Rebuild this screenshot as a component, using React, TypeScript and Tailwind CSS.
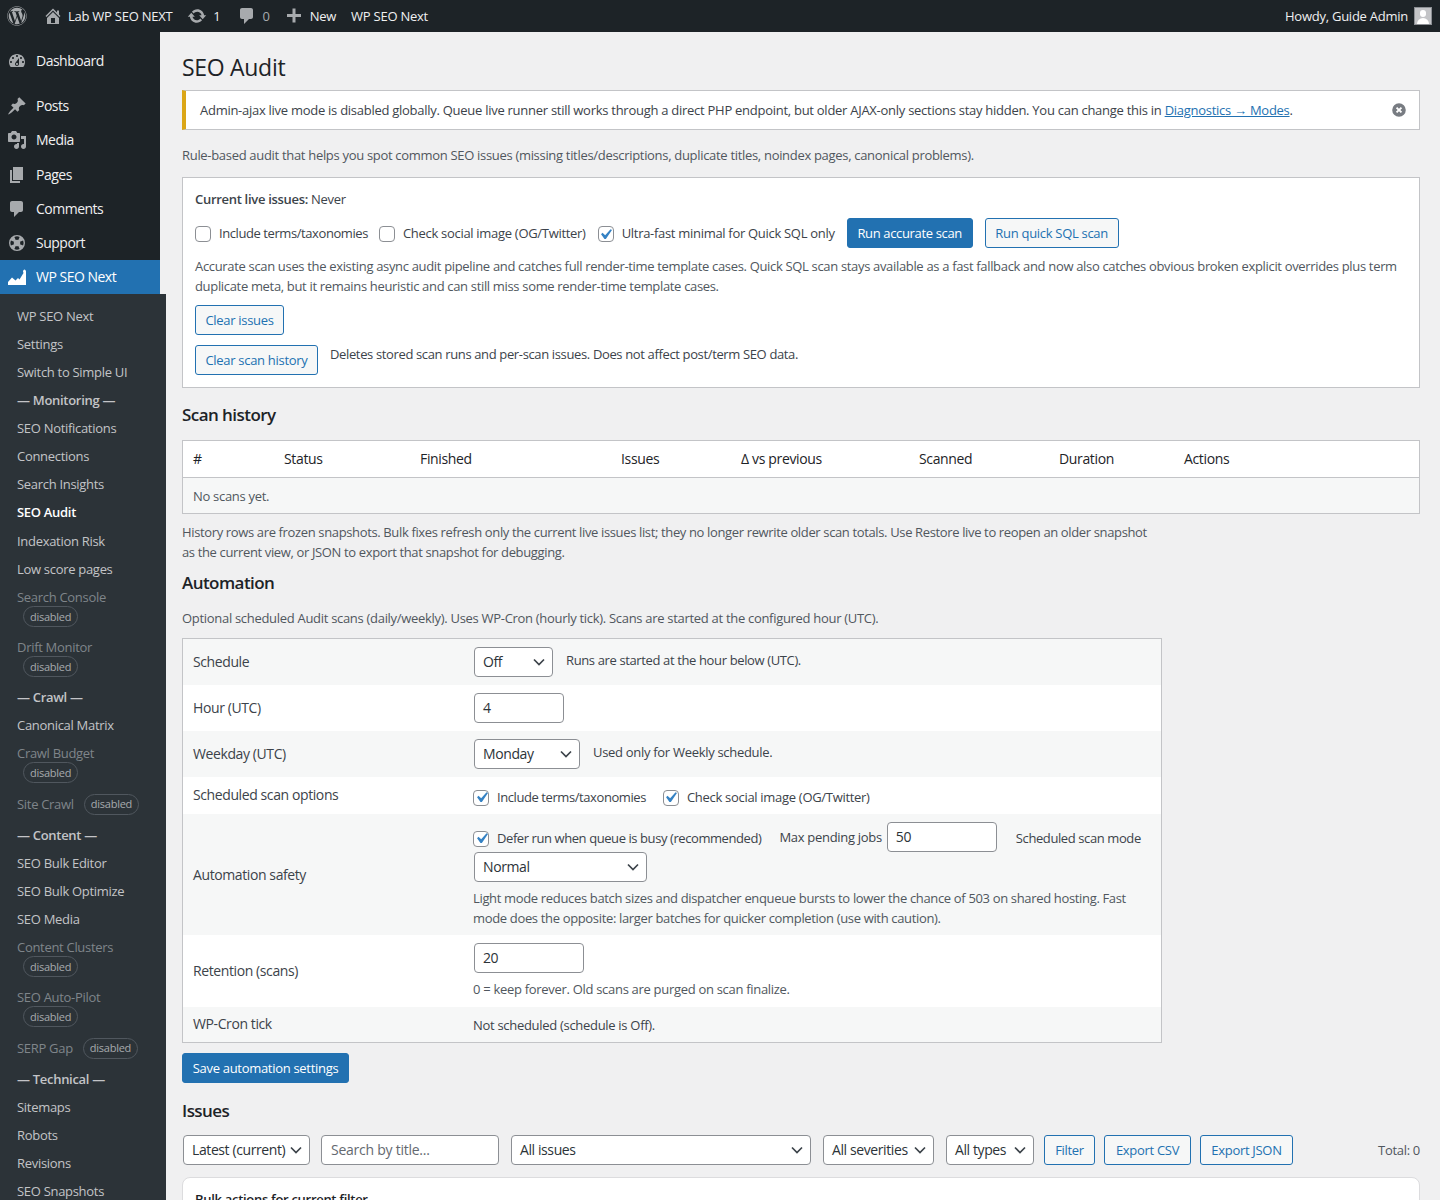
import type { ReactNode } from "react";
import { FaWordpress } from "react-icons/fa";

const PATHS = {
  home: "M16 8.5l1.53 1.53-1.06 1.06L10 4.62l-6.47 6.47-1.06-1.06L10 2.5l4 4v-2h2v4zm-6-2.46l6 5.99V18H4v-5.97zM12 17v-5H8v5h4z",
  update:
    "M10.2 3.28c3.53 0 6.43 2.61 6.92 6h2.08l-3.5 4-3.5-4h2.32c-.45-1.97-2.21-3.45-4.32-3.45-1.45 0-2.73.71-3.54 1.78L4.95 5.66C6.23 4.2 8.11 3.28 10.2 3.28zm-.4 13.44c-3.52 0-6.43-2.61-6.92-6H.8l3.5-4c1.17 1.33 2.33 2.67 3.5 4H5.48c.45 1.97 2.21 3.45 4.32 3.45 1.45 0 2.73-.71 3.54-1.77l1.71 1.95c-1.28 1.46-3.15 2.37-5.25 2.37z",
  comment: "M5 2h9c1.1 0 2 .9 2 2v7c0 1.1-.9 2-2 2h-2l-5 5v-5H5c-1.1 0-2-.9-2-2V4c0-1.1.9-2 2-2z",
  plus: "M17 8v3h-5.5v5.5h-3V11H3V8h5.5V2.5h3V8z",
  dashboard:
    "M3.76 16h12.48c1.1-1.37 1.76-3.11 1.76-5 0-4.42-3.58-8-8-8s-8 3.58-8 8c0 1.89.66 3.63 1.76 5zM10 4c.55 0 1 .45 1 1s-.45 1-1 1-1-.45-1-1 .45-1 1-1zM6 6c.55 0 1 .45 1 1s-.45 1-1 1-1-.45-1-1 .45-1 1-1zm8 0c.55 0 1 .45 1 1s-.45 1-1 1-1-.45-1-1 .45-1 1-1zm-5.37 5.55L12 7v6c0 1.1-.9 2-2 2s-2-.9-2-2c0-.57.24-1.08.63-1.45zM4 10c.55 0 1 .45 1 1s-.45 1-1 1-1-.45-1-1 .45-1 1-1zm12 0c.55 0 1 .45 1 1s-.45 1-1 1-1-.45-1-1 .45-1 1-1zm-5 3c0-.55-.45-1-1-1s-1 .45-1 1 .45 1 1 1 1-.45 1-1z",
  post: "M10.44 3.02l1.82-1.82 6.36 6.35-1.83 1.82c-1.05-.68-2.48-.57-3.41.36l-.75.75c-.92.93-1.04 2.35-.35 3.41l-1.83 1.82-2.41-2.41-2.8 2.79c-.42.42-3.38 2.71-3.8 2.29s1.86-3.39 2.28-3.81l2.79-2.79L4.1 9.36l1.83-1.82c1.05.69 2.48.57 3.4-.36l.75-.75c.93-.92 1.05-2.35.36-3.41z",
  media:
    "M13 11V4c0-.55-.45-1-1-1h-1.67L9 1H5L3.67 3H2c-.55 0-1 .45-1 1v7c0 .55.45 1 1 1h10c.55 0 1-.45 1-1zM7 4.5c1.38 0 2.5 1.12 2.5 2.5S8.38 9.5 7 9.5 4.5 8.38 4.5 7 5.62 4.5 7 4.5zM14 6h5v10.5c0 1.38-1.12 2.5-2.5 2.5S14 17.88 14 16.5s1.12-2.5 2.5-2.5c.17 0 .34.02.5.05V9h-3V6zm-4 8.05V13h2v3.5c0 1.38-1.12 2.5-2.5 2.5S7 17.88 7 16.5 8.12 14 9.5 14c.17 0 .34.02.5.05z",
  page: "M6 15V2h10v13H6zm-1 1h8v2H3V5h2v11z",
  sos: "M10 2a8 8 0 1 0 0 16 8 8 0 0 0 0-16zM7.4 3.9a6.6 6.6 0 0 1 5.2 0L11.3 7a3.2 3.2 0 0 0-2.6 0zM3.9 12.6a6.6 6.6 0 0 1 0-5.2L7 8.7a3.2 3.2 0 0 0 0 2.6zm8.7 3.5a6.6 6.6 0 0 1-5.2 0L8.7 13a3.2 3.2 0 0 0 2.6 0zm3.5-3.5L13 11.3a3.2 3.2 0 0 0 0-2.6l3.1-1.3a6.6 6.6 0 0 1 0 5.2z",
  chart: "M1 18v-3l4-4.500 3.500 3 2.500-2.500 1.500 1.500 4-6.500-.500-1.500c0-1 .800-2 1.500-2s1.500 1 1.500 2V18z",
};

function Dash({ d, className }: { d: string; className: string }) {
  return (
    <svg viewBox="0 0 20 20" fill="currentColor" className={className}>
      <path d={d} />
    </svg>
  );
}

function Check({ on }: { on?: boolean }) {
  return (
    <span className="flex h-4 w-4 shrink-0 items-center justify-center rounded-[4px] border border-[#8c8f94] bg-white">
      {on && (
        <svg viewBox="0 0 20 20" className="h-[21px] w-[21px] shrink-0 text-[#3582c4]" fill="currentColor">
          <path d="M14.83 4.89l1.34.94-5.81 8.38H9.02L5.78 9.67l1.34-1.25 2.57 2.4z" />
        </svg>
      )}
    </span>
  );
}

function Option({ on, label, className = "" }: { on?: boolean; label: string; className?: string }) {
  return (
    <label className={`flex items-center gap-2 ${className}`}>
      <Check on={on} />
      <span>{label}</span>
    </label>
  );
}

function Chevron() {
  return (
    <svg viewBox="0 0 20 20" className="h-5 w-5 shrink-0 text-[#3c434a]" fill="none" stroke="currentColor" strokeWidth="1.7">
      <path d="M5 7.500l5 5 5-5" />
    </svg>
  );
}

function Select({ value, className }: { value: string; className: string }) {
  return (
    <div
      className={`flex h-[30px] shrink-0 items-center justify-between rounded-[4px] border border-[#8c8f94] bg-white pl-2 pr-[3px] text-[14px] tracking-[-0.4px] text-[#2c3338] ${className}`}
    >
      <span className="pb-px">{value}</span>
      <Chevron />
    </div>
  );
}

function Field({ value, className }: { value: string; className: string }) {
  return (
    <div
      className={`flex h-[30px] shrink-0 items-center rounded-[4px] border border-[#8c8f94] bg-white px-2 pb-px text-[14px] tracking-[-0.4px] text-[#2c3338] ${className}`}
    >
      {value}
    </div>
  );
}

function Btn({ children, className = "" }: { children: string; className?: string }) {
  return (
    <button
      type="button"
      className={`flex h-[30px] shrink-0 items-center justify-center rounded-[3px] border border-[#2271b1] bg-[#f6f7f7] pt-[2px] text-[13px] text-[#2271b1] ${className}`}
    >
      {children}
    </button>
  );
}

function PrimaryBtn({ children, className = "" }: { children: string; className?: string }) {
  return (
    <button
      type="button"
      className={`flex h-[30px] shrink-0 items-center justify-center rounded-[3px] border border-[#2271b1] bg-[#2271b1] pt-[2px] text-[13px] text-white ${className}`}
    >
      {children}
    </button>
  );
}

const TOP_MENU = [
  { label: "Posts", icon: PATHS.post },
  { label: "Media", icon: PATHS.media },
  { label: "Pages", icon: PATHS.page },
  { label: "Comments", icon: PATHS.comment },
  { label: "Support", icon: PATHS.sos },
];

type SubItem = { label: string; kind?: "section" | "current" | "stacked" | "inline" };

const SUB_MENU: SubItem[] = [
  { label: "WP SEO Next" },
  { label: "Settings" },
  { label: "Switch to Simple UI" },
  { label: "— Monitoring —", kind: "section" },
  { label: "SEO Notifications" },
  { label: "Connections" },
  { label: "Search Insights" },
  { label: "SEO Audit", kind: "current" },
  { label: "Indexation Risk" },
  { label: "Low score pages" },
  { label: "Search Console", kind: "stacked" },
  { label: "Drift Monitor", kind: "stacked" },
  { label: "— Crawl —", kind: "section" },
  { label: "Canonical Matrix" },
  { label: "Crawl Budget", kind: "stacked" },
  { label: "Site Crawl", kind: "inline" },
  { label: "— Content —", kind: "section" },
  { label: "SEO Bulk Editor" },
  { label: "SEO Bulk Optimize" },
  { label: "SEO Media" },
  { label: "Content Clusters", kind: "stacked" },
  { label: "SEO Auto-Pilot", kind: "stacked" },
  { label: "SERP Gap", kind: "inline" },
  { label: "— Technical —", kind: "section" },
  { label: "Sitemaps" },
  { label: "Robots" },
  { label: "Revisions" },
  { label: "SEO Snapshots" },
];

function Badge() {
  return (
    <span className="inline-flex h-[21px] items-center rounded-full border border-[#50575e] px-[6px] text-[11px] tracking-[-0.25px] text-[#a7aaad]">
      disabled
    </span>
  );
}

function SubRow({ item }: { item: SubItem }) {
  if (item.kind === "stacked") {
    return (
      <div className="h-[50px] pl-[17px] pt-[4.5px] text-[#7f858a]">
        <div className="leading-[18px]">{item.label}</div>
        <div className="pl-[6px] leading-[21px]">
          <Badge />
        </div>
      </div>
    );
  }
  if (item.kind === "inline") {
    return (
      <div className="flex h-[31.5px] items-center gap-[10px] pb-[2px] pl-[17px] text-[#7f858a]">
        {item.label}
        <Badge />
      </div>
    );
  }
  const tone =
    item.kind === "current"
      ? "font-semibold text-white"
      : item.kind === "section"
        ? "font-semibold text-[#c3c4c7]"
        : "text-[#c3c4c7]";
  return <div className={`flex h-[28.14px] items-center pl-[17px] ${tone}`}>{item.label}</div>;
}

function Sidebar() {
  return (
    <aside className="w-40 shrink-0 bg-[#1d2327] text-[14px] tracking-[-0.5px] text-[#f0f0f1]">
      <div className="mt-3 flex h-[34px] items-center gap-[9px] pl-[7px]">
        <Dash d={PATHS.dashboard} className="h-5 w-5 text-[#a7aaad]" />
        <span className="pb-[2px]">Dashboard</span>
      </div>
      <div className="mt-[11px]">
        {TOP_MENU.map((m) => (
          <div key={m.label} className="flex h-[34.3px] items-center gap-[9px] pl-[7px]">
            <Dash d={m.icon} className="h-5 w-5 text-[#a7aaad]" />
            <span className="pb-px">{m.label}</span>
          </div>
        ))}
      </div>
      <div className="flex h-[34px] items-center gap-[9px] bg-[#2271b1] pl-[7px] text-white">
        <Dash d={PATHS.chart} className="h-5 w-5" />
        <span className="pb-px">WP SEO Next</span>
      </div>
      <div className="w-[166px] bg-[#2c3338] pb-10 pt-[7.8px] text-[13px] tracking-[-0.3px]">
        {SUB_MENU.map((item) => (
          <SubRow key={item.label} item={item} />
        ))}
      </div>
    </aside>
  );
}

function TopBar() {
  return (
    <header className="flex h-8 items-center justify-between bg-[#1d2327] pr-2 text-[13px] tracking-[-0.25px] text-[#f0f0f1]">
      <div className="flex items-center">
        <FaWordpress className="ml-[7px] h-5 w-5 text-[#a7aaad]" />
        <Dash d={PATHS.home} className="ml-[16px] h-5 w-5 text-[#a7aaad]" />
        <span className="ml-[5px] pt-[2px]">Lab WP SEO NEXT</span>
        <Dash d={PATHS.update} className="ml-[15px] h-5 w-5 text-[#a7aaad]" />
        <span className="ml-[6px] pt-[2px]">1</span>
        <Dash d={PATHS.comment} className="ml-[16px] h-5 w-5 text-[#a7aaad]" />
        <span className="ml-[6px] pt-[2px] text-[#a7aaad]">0</span>
        <Dash d={PATHS.plus} className="ml-[14px] h-5 w-5 text-[#a7aaad]" />
        <span className="ml-[6px] pt-[2px]">New</span>
        <span className="ml-[15px] pt-[2px]">WP SEO Next</span>
      </div>
      <div className="flex items-center gap-[6px]">
        <span className="pt-[2px]">Howdy, Guide Admin</span>
        <span className="relative h-[18px] w-[18px] overflow-hidden border border-[#8c8f94] bg-[#c3c4c7]">
          <span className="absolute left-[5px] top-[2px] h-[7px] w-[6px] rounded-full bg-white" />
          <span className="absolute left-[2px] top-[10px] h-[8px] w-3 rounded-t-full bg-white" />
        </span>
      </div>
    </header>
  );
}

function Notice() {
  return (
    <div className="mt-2 flex h-10 items-center justify-between border border-l-4 border-[#c3c4c7] border-l-[#dba617] bg-white pl-[14px] pr-[12px] text-[#3c434a]">
      <p className="pt-[2px] tracking-[-0.27px]">
        Admin-ajax live mode is disabled globally. Queue live runner still works through a direct PHP endpoint, but older
        AJAX-only sections stay hidden. You can change this in{" "}
        <a href="#" className="text-[#2271b1] underline">
          Diagnostics → Modes
        </a>
        .
      </p>
      <svg viewBox="0 0 20 20" className="h-4 w-4 shrink-0 text-[#787c82]" fill="currentColor">
        <path d="M10 1.500a8.500 8.500 0 1 0 0 17 8.500 8.500 0 0 0 0-17zm3.900 10.700l-1.700 1.700L10 11.700l-2.200 2.200-1.700-1.700L8.300 10 6.100 7.800l1.700-1.700L10 8.300l2.200-2.200 1.700 1.700L11.700 10z" />
      </svg>
    </div>
  );
}

function ScanCard() {
  return (
    <section className="mt-3 h-[211px] border border-[#c3c4c7] bg-white px-3 pt-[11px]">
      <p className="leading-5">
        <strong className="font-semibold">Current live issues:</strong> Never
      </p>
      <div className="mt-[9px] flex items-center">
        <Option label="Include terms/taxonomies" className="pt-[2px] tracking-[-0.42px]" />
        <Option label="Check social image (OG/Twitter)" className="ml-[11px] pt-[2px]" />
        <Option on label="Ultra-fast minimal for Quick SQL only" className="ml-3 pt-[2px]" />
        <PrimaryBtn className="ml-3 w-[126px] tracking-[-0.35px]">Run accurate scan</PrimaryBtn>
        <Btn className="ml-3 w-[134px]">Run quick SQL scan</Btn>
      </div>
      <p className="mt-2 leading-5 tracking-[-0.33px] text-[#50575e]">
        Accurate scan uses the existing async audit pipeline and catches full render-time template cases. Quick SQL scan
        stays available as a fast fallback and now also catches obvious broken explicit overrides plus term duplicate
        meta, but it remains heuristic and can still miss some render-time template cases.
      </p>
      <Btn className="mt-[9px] w-[89px]">Clear issues</Btn>
      <div className="mt-[10px] flex items-start">
        <Btn className="w-[123px]">Clear scan history</Btn>
        <span className="-mt-px ml-3 leading-5 tracking-[-0.36px]">
          Deletes stored scan runs and per-scan issues. Does not affect post/term SEO data.
        </span>
      </div>
    </section>
  );
}

function HistoryTable() {
  const cols = ["#", "Status", "Finished", "Issues", "Δ vs previous", "Scanned", "Duration", "Actions"];
  return (
    <div className="mt-[13px] border border-[#c3c4c7] bg-white">
      <div className="grid h-[37px] grid-cols-[91px_136px_201px_120px_178px_140px_125px_1fr] items-center border-b border-[#c3c4c7] pb-[2px] pl-[10px] text-[14px] tracking-[-0.35px] text-[#1d2327]">
        {cols.map((c) => (
          <span key={c}>{c}</span>
        ))}
      </div>
      <div className="flex h-[35px] items-center bg-[#f6f7f7] pl-[10px] pt-[2px] text-[#50575e]">No scans yet.</div>
    </div>
  );
}

function SettingRow({
  label,
  striped,
  className,
  labelClass = "pb-[2px]",
  children,
}: {
  label: string;
  striped?: boolean;
  className: string;
  labelClass?: string;
  children: ReactNode;
}) {
  return (
    <div className={`flex items-center ${striped ? "bg-[#f6f7f7]" : "bg-white"} ${className}`}>
      <div className={`w-[290px] shrink-0 pl-[10px] text-[14px] tracking-[-0.4px] text-[#3c434a] ${labelClass}`}>{label}</div>
      <div className="min-w-0 flex-1">{children}</div>
    </div>
  );
}

function AutomationTable() {
  return (
    <div className="mt-[10px] w-[980px] border border-[#c3c4c7] bg-white">
      <SettingRow label="Schedule" striped className="h-[46px]">
        <div className="flex items-center pl-px">
          <Select value="Off" className="w-[79px]" />
          <span className="ml-[13px] pb-[2px] tracking-[-0.37px]">Runs are started at the hour below (UTC).</span>
        </div>
      </SettingRow>
      <SettingRow label="Hour (UTC)" className="h-[46px]">
        <Field value="4" className="ml-px w-[90px]" />
      </SettingRow>
      <SettingRow label="Weekday (UTC)" striped className="h-[46px]">
        <div className="flex items-center pl-px">
          <Select value="Monday" className="w-[106px]" />
          <span className="ml-[13px] pb-[2px]">Used only for Weekly schedule.</span>
        </div>
      </SettingRow>
      <SettingRow label="Scheduled scan options" className="h-[37px]">
        <div className="flex items-center pt-1">
          <Option on label="Include terms/taxonomies" className="tracking-[-0.42px]" />
          <Option on label="Check social image (OG/Twitter)" className="ml-[17px]" />
        </div>
      </SettingRow>
      <SettingRow label="Automation safety" striped className="h-[121px]" labelClass="">
        <div className="flex h-[30px] items-center">
          <Option on label="Defer run when queue is busy (recommended)" className="pt-1 tracking-[-0.42px]" />
          <span className="ml-[18px] pt-[2px]">Max pending jobs</span>
          <Field value="50" className="ml-[5px] w-[110px]" />
          <span className="ml-[19px] pt-1 tracking-[-0.4px]">Scheduled scan mode</span>
        </div>
        <Select value="Normal" className="ml-px w-[173px]" />
        <p className="mt-[6px] w-[670px] leading-5 tracking-[-0.34px] text-[#50575e]">
          Light mode reduces batch sizes and dispatcher enqueue bursts to lower the chance of 503 on shared hosting. Fast
          mode does the opposite: larger batches for quicker completion (use with caution).
        </p>
      </SettingRow>
      <SettingRow label="Retention (scans)" className="h-[72px]">
        <Field value="20" className="ml-px w-[110px]" />
        <p className="mt-[6px] leading-5 text-[#50575e]">0 = keep forever. Old scans are purged on scan finalize.</p>
      </SettingRow>
      <SettingRow label="WP-Cron tick" striped className="h-[35px]">
        <div className="pt-[3px]">Not scheduled (schedule is Off).</div>
      </SettingRow>
    </div>
  );
}

function IssuesFilters() {
  return (
    <div className="mt-3 flex items-center pl-px">
      <Select value="Latest (current)" className="w-[127px]" />
      <Field value="Search by title..." className="ml-[11px] w-[178px] pl-[9px] !tracking-[-0.25px] !text-[#646970]" />
      <Select value="All issues" className="ml-3 w-[300px]" />
      <Select value="All severities" className="ml-3 w-[111px]" />
      <Select value="All types" className="ml-3 w-[88px]" />
      <Btn className="ml-[10px] w-[51px]">Filter</Btn>
      <Btn className="ml-[9px] w-[87px]">Export CSV</Btn>
      <Btn className="ml-[9px] w-[93px]">Export JSON</Btn>
      <span className="ml-auto pt-[2px] text-[#50575e]">Total: 0</span>
    </div>
  );
}

const H2 = "text-[17px] font-semibold leading-6 tracking-[-0.55px] text-[#1d2327]";

export default function App() {
  return (
    <div className="h-[1200px] overflow-hidden bg-[#f0f0f1] font-['Open_Sans',sans-serif] text-[13px] tracking-[-0.3px] text-[#3c434a]">
      <TopBar />
      <div className="flex">
        <Sidebar />
        <main className="min-w-0 flex-1 pl-[22px] pr-5">
          <h1 className="mt-[21px] text-[23px] leading-[29px] text-[#1d2327]">SEO Audit</h1>
          <Notice />
          <p className="mt-[15px] leading-5 tracking-[-0.31px] text-[#50575e]">
            Rule-based audit that helps you spot common SEO issues (missing titles/descriptions, duplicate titles, noindex
            pages, canonical problems).
          </p>
          <ScanCard />
          <h2 className={`mt-[15px] ${H2}`}>Scan history</h2>
          <HistoryTable />
          <p className="mt-2 max-w-[970px] leading-5 tracking-[-0.36px] text-[#50575e]">
            History rows are frozen snapshots. Bulk fixes refresh only the current live issues list; they no longer rewrite
            older scan totals. Use Restore live to reopen an older snapshot as the current view, or JSON to export that
            snapshot for debugging.
          </p>
          <h2 className={`mt-[9px] ${H2}`}>Automation</h2>
          <p className="mt-[13px] leading-5 text-[#50575e]">
            Optional scheduled Audit scans (daily/weekly). Uses WP-Cron (hourly tick). Scans are started at the configured
            hour (UTC).
          </p>
          <AutomationTable />
          <PrimaryBtn className="mt-[10px] w-[167px]">Save automation settings</PrimaryBtn>
          <h2 className={`mt-4 ${H2}`}>Issues</h2>
          <IssuesFilters />
          <section className="mt-3 rounded-lg border border-[#dcdcde] bg-white px-3 pt-[11px]">
            <p className="font-semibold leading-5 text-[#1d2327]">Bulk actions for current filter</p>
          </section>
        </main>
      </div>
    </div>
  );
}
